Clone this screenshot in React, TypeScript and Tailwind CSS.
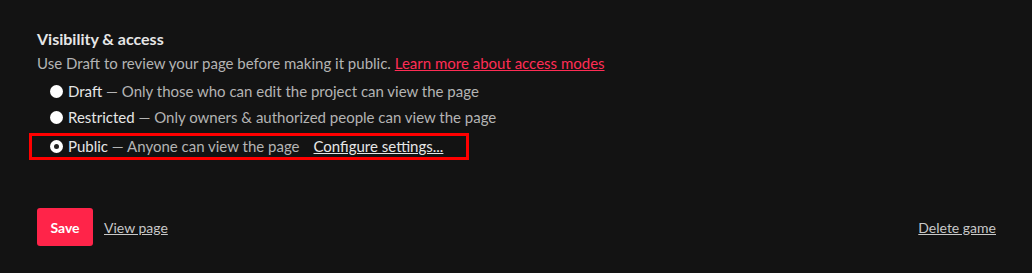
import React from "react";

function Radio({ checked }: { checked?: boolean }) {
  return (
    <span className="relative inline-flex h-[13px] w-[13px] shrink-0 items-center justify-center rounded-full bg-white">
      {checked && <span className="h-[5px] w-[5px] rounded-full bg-[#222]" />}
    </span>
  );
}

export default function App() {
  return (
    <div className="h-[273px] w-[1032px] overflow-hidden bg-[#131313] font-['Lato','Noto_Sans',sans-serif] text-[15px] text-[#b4b4b4]">
      <div className="px-[37px] pt-[29px]">
        <div className="text-[16px] font-bold leading-[20px] text-[#e6e6e6]">Visibility &amp; access</div>
        <div className="mt-[4px] leading-[20px]">
          Use Draft to review your page before making it public.{" "}
          <a className="text-[#ff2d55] underline" href="#">Learn more about access modes</a>
        </div>
        <div className="mt-[5px] flex flex-col">
          <label className="flex h-[26px] items-center gap-[5px] pl-[13px]">
            <Radio />
            <span><span className="text-[#e6e6e6]">Draft</span> — Only those who can edit the project can view the page</span>
          </label>
          <label className="flex h-[26px] items-center gap-[5px] pl-[13px]">
            <Radio />
            <span><span className="text-[#e6e6e6]">Restricted</span> — Only owners &amp; authorized people can view the page</span>
          </label>
          <div className="-ml-[8px] mt-[3px] flex h-[27px] w-[440px] items-center border-[3px] border-[#ff0000] pl-[18px]">
            <label className="flex items-center gap-[5px]">
              <Radio checked />
              <span><span className="text-[#e6e6e6]">Public</span> — Anyone can view the page</span>
            </label>
            <a className="ml-[14px] text-[#e6e6e6] underline" href="#">Configure settings...</a>
          </div>
        </div>
        <div className="mt-[48px] flex items-center text-[14px]">
          <button className="h-[38px] w-[56px] rounded-[3px] bg-[#ff2449] font-bold text-white">Save</button>
          <a className="ml-[11px] text-[#c8c8c8] underline" href="#">View page</a>
          <a className="ml-auto mr-[-1px] text-[#c8c8c8] underline" href="#">Delete game</a>
        </div>
      </div>
    </div>
  );
}
